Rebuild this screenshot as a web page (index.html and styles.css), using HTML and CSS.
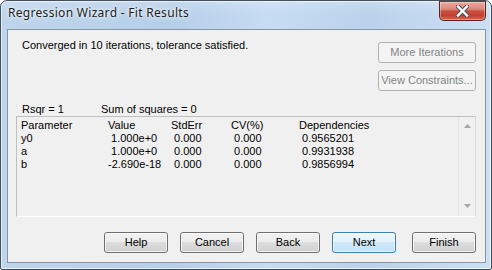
FILE: index.html
```html
<!DOCTYPE html>
<html>
<head>
<meta charset="utf-8">
<link rel="stylesheet" href="styles.css">
</head>
<body>
<div class="window">
  <div class="titlebar">
    <span class="title">Regression Wizard - Fit Results</span>
    <button class="close" aria-label="Close">
      <svg width="13" height="12" viewBox="0 0 13 12">
        <path d="M2 1.5 L11 10.5 M11 1.5 L2 10.5" stroke="#4a4f55" stroke-width="4.4" stroke-linecap="square" fill="none"/>
        <path d="M2 1.5 L11 10.5 M11 1.5 L2 10.5" stroke="#ffffff" stroke-width="2.4" stroke-linecap="square" fill="none"/>
      </svg>
    </button>
  </div>
  <div class="client">
    <div class="top">
      <p class="status">Converged in 10 iterations, tolerance satisfied.</p>
      <div class="side">
        <button class="btn wide" disabled>More Iterations</button>
        <button class="btn wide" disabled>View Constraints...</button>
      </div>
    </div>
    <div class="stats"><span class="rsqr">Rsqr = 1</span><span>Sum of squares = 0</span></div>
    <div class="list">
      <div class="grid">
        <span>Parameter</span><span>Value</span><span>StdErr</span><span>CV(%)</span><span>Dependencies</span>
        <span>y0</span><span> 1.000e+0</span><span> 0.000</span><span> 0.000</span><span> 0.9565201</span>
        <span>a</span><span> 1.000e+0</span><span> 0.000</span><span> 0.000</span><span> 0.9931938</span>
        <span>b</span><span>-2.690e-18</span><span> 0.000</span><span> 0.000</span><span> 0.9856994</span>
      </div>
      <div class="scrollbar">
        <svg width="7" height="4" viewBox="0 0 7 4"><polygon points="3.5,0 7,4 0,4" fill="#a6a6a6"/></svg>
        <svg width="7" height="4" viewBox="0 0 7 4"><polygon points="0,0 7,0 3.5,4" fill="#a6a6a6"/></svg>
      </div>
    </div>
    <div class="actions">
      <button class="btn">Help</button>
      <button class="btn">Cancel</button>
      <button class="btn">Back</button>
      <button class="btn default">Next</button>
      <button class="btn finish">Finish</button>
    </div>
  </div>
</div>
</body>
</html>
```
FILE: styles.css
```css
html, body {
  margin: 0;
  background: #ffffff;
}
body {
  font-family: "Liberation Sans", Arial, sans-serif;
  font-size: 11px;
  color: #000;
}
.window {
  width: 492px;
  height: 270px;
  box-sizing: border-box;
  border: 1px solid #40505f;
  border-radius: 7px 7px 2px 2px;
  background:
    linear-gradient(180deg, rgba(255,255,255,0.2) 0px, rgba(255,255,255,0) 14px),
    linear-gradient(90deg, #bed5ec 0%, #b6cfe9 35%, #c6dcf2 55%, #bad2eb 75%, #cce0f4 100%);
  box-shadow: inset 0 0 0 1px rgba(255,255,255,0.6);
  display: flex;
  flex-direction: column;
  overflow: hidden;
}
.titlebar {
  height: 28px;
  flex: none;
  display: flex;
  justify-content: space-between;
  align-items: flex-start;
  padding: 0 5px 0 7px;
}
.title {
  font-family: "Noto Sans", "Open Sans", sans-serif;
  font-size: 12px;
  line-height: 16px;
  letter-spacing: 0.3px;
  margin-top: 4px;
  color: #1e1e1e;
  text-shadow: 0 0 6px rgba(255,255,255,0.9), 0 0 3px rgba(255,255,255,0.9);
}
.close {
  width: 47px;
  height: 20px;
  box-sizing: border-box;
  padding: 0;
  border: 1px solid #5b231c;
  border-top-color: #6e3a33;
  border-radius: 0 0 5px 5px;
  background: linear-gradient(180deg, #e8aa9e 0%, #d98a7c 40%, #c9503f 50%, #c3402e 75%, #d46752 100%);
  box-shadow: inset 0 0 0 1px rgba(255,255,255,0.35);
  display: flex;
  align-items: center;
  justify-content: center;
}
.close svg { display: block; }
.client {
  flex: 1;
  margin: 0 5px 6px 6px;
  border: 1px solid #8796a7;
  background: #f0f0f0;
  padding: 9px 9px 9px 8px;
  display: flex;
  flex-direction: column;
}
.top {
  height: 52px;
  display: flex;
  justify-content: space-between;
  align-items: flex-start;
}
.status {
  margin: 0 0 0 6px;
  line-height: 13px;
}
.side {
  margin-top: 3px;
  display: flex;
  flex-direction: column;
  gap: 7px;
}
.stats {
  margin-top: 12px;
  line-height: 13px;
  padding-left: 6px;
  display: flex;
}
.rsqr { width: 79px; }
.list {
  height: 101px;
  box-sizing: border-box;
  border: 1px solid;
  border-color: #bfbfbf #dadada #ffffff #bfbfbf;
  display: flex;
}
.grid {
  flex: 1;
  padding: 2px 0 0 4px;
  display: grid;
  grid-template-columns: 87px 63px 60px 68px auto;
  grid-auto-rows: 13px;
  align-content: start;
  line-height: 13px;
  white-space: pre;
}
.scrollbar {
  width: 16px;
  border-left: 1px solid #e4e4e4;
  display: flex;
  flex-direction: column;
  justify-content: space-between;
  align-items: center;
  padding: 7px 0 8px;
}
.scrollbar svg { display: block; }
.actions {
  margin-top: 15px;
  display: flex;
  justify-content: flex-end;
  gap: 12px;
}
.btn {
  width: 64px;
  height: 21px;
  box-sizing: border-box;
  padding: 0;
  border: 1px solid #707070;
  border-radius: 3px;
  background: linear-gradient(180deg, #f2f2f2 0%, #ebebeb 50%, #dddddd 50%, #cfcfcf 100%);
  box-shadow: inset 0 0 0 1px rgba(255,255,255,0.75);
  font-family: "Liberation Sans", Arial, sans-serif;
  font-size: 11px;
  color: #000;
  line-height: 13px;
}
.btn.wide { width: 98px; }
.btn:disabled {
  border-color: #adb2b5;
  background: #f4f4f4;
  color: #838383;
  box-shadow: none;
}
.btn.default {
  border-color: #3c7fb1;
  background: linear-gradient(180deg, #eef7fd 0%, #e3f2fc 50%, #d0eafa 50%, #c3e3f7 100%);
  box-shadow: inset 0 0 0 1px rgba(255,255,255,0.6);
}
.btn.finish { margin-left: 4px; }
```
